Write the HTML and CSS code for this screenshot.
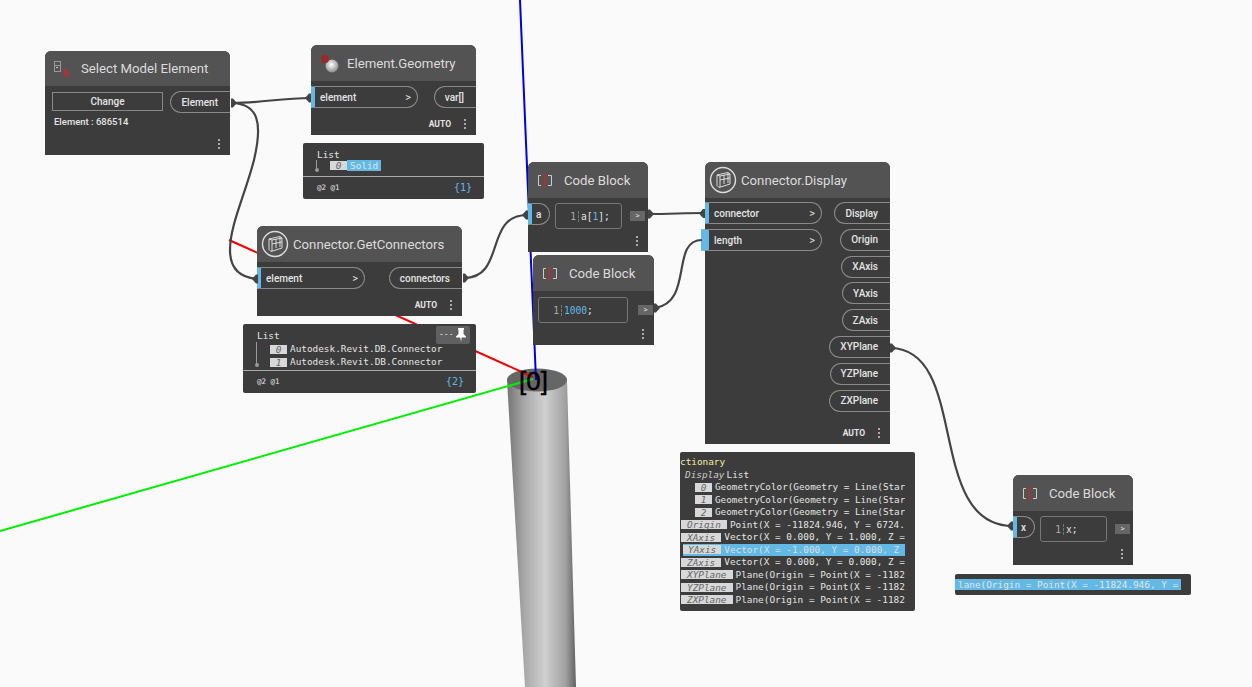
FILE: index.html
```html
<!DOCTYPE html>
<html>
<head>
<title>Dynamo graph</title>
<link rel="stylesheet" href="styles.css">
</head>
<body>
<div class="canvas">

    <!-- 3d background -->
    <svg class="layer" width="1252" height="687">
        <defs>
            <linearGradient id="pipe" x1="0" x2="1" y1="0" y2="0">
                <stop offset="0" stop-color="#747474"/>
                <stop offset="0.25" stop-color="#a8a8a8"/>
                <stop offset="0.55" stop-color="#d0d0d0"/>
                <stop offset="0.85" stop-color="#a0a0a0"/>
                <stop offset="1" stop-color="#626262"/>
            </linearGradient>
        </defs>
        <path d="M507 380 L525 687 L576 687 L567 380 Z" fill="url(#pipe)"/>
        <ellipse cx="537" cy="380" rx="30" ry="11.500" fill="#666"/>
        <line x1="520" y1="0" x2="536" y2="380" stroke="#0000e0" stroke-width="2"/>
        <line x1="229" y1="240" x2="533" y2="377" stroke="#f00000" stroke-width="2"/>
        <line x1="0" y1="531" x2="533" y2="379" stroke="#00ee00" stroke-width="2"/>
    </svg>
    <div class="axis-label">[0]</div>

    <div class="node n-select">
        <div class="node-head head-35">
            <svg class="icon" width="26" height="26" viewBox="0 0 26 26">
                <rect x="5.500" y="5.500" width="6" height="10" fill="none" stroke="#999"/>
                <line x1="5.500" y1="9.500" x2="11.500" y2="9.500" stroke="#999"/>
                <rect x="7" y="11" width="2" height="1" fill="#ccc"/>
                <path d="M14.500 11 L21.500 18.500 L19 18.500 L20 21.500 L17.500 21.500 L16.500 19 L15 20.500 Z" fill="#a33"/>
            </svg>
            <span class="title">Select Model Element</span>
        </div>
        <div class="select-body">
            <div class="select-left">
                <div class="change">Change</div>
                <div class="elem-id">Element : 686514</div>
            </div>
            <div class="out-port">Element</div>
        </div>
        <div class="node-foot"><span class="dots"></span></div>
    </div>

    <div class="node n-geom">
        <div class="node-head">
            <svg class="icon" width="26" height="26" viewBox="0 0 26 26">
                <defs>
                    <radialGradient id="ball" cx="0.45" cy="0.4" r="0.7">
                        <stop offset="0" stop-color="#fff"/>
                        <stop offset="1" stop-color="#777"/>
                    </radialGradient>
                </defs>
                <circle cx="17" cy="16" r="6.500" fill="url(#ball)"/>
                <circle cx="10" cy="9" r="4" fill="#9a2a2a"/>
            </svg>
            <span class="title">Element.Geometry</span>
        </div>
        <div class="node-body">
            <div class="in-port w-105">element<b>&gt;</b></div>
            <div class="out-port">var[]</div>
        </div>
        <div class="node-foot"><span class="auto">AUTO</span><span class="dots"></span></div>
    </div>

    <div class="watch w-solid">
        <div class="watch-main">
            <span class="tree"></span>
            <div class="list-title">List</div>
            <div class="row ind flush"><span class="idx">0</span><span class="hl">Solid</span></div>
        </div>
        <div class="watch-foot"><span>@2 @1</span><span class="count">{1}</span></div>
    </div>

    <div class="node n-getconn">
        <div class="node-head tight">
            <svg class="icon" width="28" height="28" viewBox="0 0 28 28">
                <circle cx="14" cy="14" r="12.500" fill="none" stroke="#ddd" stroke-width="1.400"/>
                <path d="M8 9 L19 6.500 L21 8 L21 18 L10 21.500 L8 19.500 Z M11 10 L21 8 M11 10 L11 21 M8 9 L11 10 M15 9 L15 18 M19 7 L19 17 M11 14 L21 12" fill="none" stroke="#ddd"/>
            </svg>
            <span class="title">Connector.GetConnectors</span>
        </div>
        <div class="node-body">
            <div class="in-port w-108">element<b>&gt;</b></div>
            <div class="out-port">connectors</div>
        </div>
        <div class="node-foot"><span class="auto">AUTO</span><span class="dots"></span></div>
    </div>

    <div class="watch w-conn">
        <div class="pin">--- <svg width="12" height="14" viewBox="0 0 12 14"><path d="M3 0 H9 V1.500 L8.500 2 V6 L11 8.500 V9.500 H6.700 L6 14 L5.300 9.500 H1 V8.500 L3.500 6 V2 L3 1.500 Z" fill="#fff"/></svg></div>
        <div class="watch-main">
            <span class="tree"></span>
            <div class="list-title">List</div>
            <div class="row ind"><span class="idx">0</span><span>Autodesk.Revit.DB.Connector</span></div>
            <div class="row ind"><span class="idx">1</span><span>Autodesk.Revit.DB.Connector</span></div>
        </div>
        <div class="watch-foot"><span>@2 @1</span><span class="count">{2}</span></div>
    </div>

    <div class="node n-code1">
        <div class="node-head code-head">
            <svg class="icon-code" width="18" height="16" viewBox="0 0 18 16">
                <path d="M5 3.500 H2.500 V13.500 H5 M12 3.500 H15.500 V13.500 H12" fill="none" stroke="#ccc"/>
                <path d="M6.500 2.500 H10.500 M6.500 14.500 H10.500" stroke="#a33"/>
                <rect x="7.500" y="2" width="2" height="13" fill="#a33"/>
            </svg>
            <span class="title">Code Block</span>
        </div>
        <div class="node-body code-body">
            <div class="in-port short">a</div>
            <div class="code w-a"><span class="ln">1</span><span>a[<i>1</i>];</span></div>
            <div class="run">&gt;</div>
        </div>
        <div class="node-foot"><span class="dots"></span></div>
    </div>

    <div class="node n-code2">
        <div class="node-head code-head">
            <svg class="icon-code" width="18" height="16" viewBox="0 0 18 16">
                <path d="M5 3.500 H2.500 V13.500 H5 M12 3.500 H15.500 V13.500 H12" fill="none" stroke="#ccc"/>
                <path d="M6.500 2.500 H10.500 M6.500 14.500 H10.500" stroke="#a33"/>
                <rect x="7.500" y="2" width="2" height="13" fill="#a33"/>
            </svg>
            <span class="title">Code Block</span>
        </div>
        <div class="node-body code-body pad-5">
            <div class="code w-1000"><span class="ln">1</span><span><i>1000</i>;</span></div>
            <div class="run">&gt;</div>
        </div>
        <div class="node-foot"><span class="dots"></span></div>
    </div>

    <div class="node n-display">
        <div class="node-head tight">
            <svg class="icon" width="28" height="28" viewBox="0 0 28 28">
                <circle cx="14" cy="14" r="12.500" fill="none" stroke="#ddd" stroke-width="1.400"/>
                <path d="M8 9 L19 6.500 L21 8 L21 18 L10 21.500 L8 19.500 Z M11 10 L21 8 M11 10 L11 21 M8 9 L11 10 M15 9 L15 18 M19 7 L19 17 M11 14 L21 12" fill="none" stroke="#ddd"/>
            </svg>
            <span class="title">Connector.Display</span>
        </div>
        <div class="display-body">
            <div class="display-ins">
                <div class="in-port w-117">connector<b>&gt;</b></div>
                <div class="in-port w-117 wide-tab">length<b>&gt;</b></div>
            </div>
            <div class="display-outs">
                <div class="out-port">Display</div>
                <div class="out-port">Origin</div>
                <div class="out-port">XAxis</div>
                <div class="out-port">YAxis</div>
                <div class="out-port">ZAxis</div>
                <div class="out-port">XYPlane</div>
                <div class="out-port">YZPlane</div>
                <div class="out-port">ZXPlane</div>
            </div>
        </div>
        <div class="node-foot"><span class="auto">AUTO</span><span class="dots"></span></div>
    </div>

    <div class="watch w-dict">
        <div class="dict-clip">
            <div class="dict-title">ctionary</div>
            <div class="dict-display"><em>Display</em><span>List</span></div>
            <div class="row sub"><span class="idx">0</span><span>GeometryColor(Geometry = Line(Star</span></div>
            <div class="row sub"><span class="idx">1</span><span>GeometryColor(Geometry = Line(Star</span></div>
            <div class="row sub"><span class="idx">2</span><span>GeometryColor(Geometry = Line(Star</span></div>
            <div class="row"><span class="key">Origin</span><span>Point(X = -11824.946, Y = 6724.</span></div>
            <div class="row"><span class="key">XAxis</span><span>Vector(X = 0.000, Y = 1.000, Z =</span></div>
            <div class="row sel"><span class="key">YAxis</span><span class="sel-text">Vector(X = -1.000, Y = 0.000, Z</span></div>
            <div class="row"><span class="key">ZAxis</span><span>Vector(X = 0.000, Y = 0.000, Z =</span></div>
            <div class="row"><span class="key">XYPlane</span><span>Plane(Origin = Point(X = -1182</span></div>
            <div class="row"><span class="key">YZPlane</span><span>Plane(Origin = Point(X = -1182</span></div>
            <div class="row"><span class="key">ZXPlane</span><span>Plane(Origin = Point(X = -1182</span></div>
        </div>
    </div>

    <div class="node n-code3">
        <div class="node-head code-head">
            <svg class="icon-code" width="18" height="16" viewBox="0 0 18 16">
                <path d="M5 3.500 H2.500 V13.500 H5 M12 3.500 H15.500 V13.500 H12" fill="none" stroke="#ccc"/>
                <path d="M6.500 2.500 H10.500 M6.500 14.500 H10.500" stroke="#a33"/>
                <rect x="7.500" y="2" width="2" height="13" fill="#a33"/>
            </svg>
            <span class="title">Code Block</span>
        </div>
        <div class="node-body code-body">
            <div class="in-port short">x</div>
            <div class="code w-a"><span class="ln">1</span><span class="plain">x;</span></div>
            <div class="run">&gt;</div>
        </div>
        <div class="node-foot"><span class="dots"></span></div>
    </div>

    <div class="watch w-plane">
        <div class="plane-text">lane(Origin = Point(X = -11824.946, Y =</div>
    </div>

    <!-- wires -->
    <svg class="layer wires" width="1252" height="687">
        <path d="M232 103 C258 104 263 122 254 160 C245 195 230 225 230 250 C230 270 242 278 258 279"/>
        <path d="M232 103 C262 103 280 98 311 98"/>
        <path d="M464 278 C506 278 484 215 527 215"/>
        <path d="M649 214 C670 214 685 213 705 213"/>
        <path d="M655 308 C694 302 670 240 702 240"/>
        <path d="M891 348 C970 350 925 526 1013 526"/>
        <g class="caps">
            <path d="M231 98.500 H233 L237 103 L233 107.500 H231 Z"/>
            <path d="M311 93.500 H309 L305 98 L309 102.500 H311 Z"/>
            <path d="M258 274.500 H256 L252 279 L256 283.500 H258 Z"/>
            <path d="M463 273.500 H465 L469 278 L465 282.500 H463 Z"/>
            <path d="M528 210.500 H526 L522 215 L526 219.500 H528 Z"/>
            <path d="M648 209.500 H650 L654 214 L650 218.500 H648 Z"/>
            <path d="M705 209 H703 L699 213.500 L703 218 H705 Z"/>
            <path d="M654 303.500 H656 L660 308 L656 312.500 H654 Z"/>
            <path d="M890 343.500 H892 L896 348 L892 352.500 H890 Z"/>
            <path d="M1013 521.500 H1011 L1007 526 L1011 530.500 H1013 Z"/>
        </g>
    </svg>
</div>
</body>
</html>
```

FILE: styles.css
```css
body {
    margin: 0;
    background-color: #fafafa;
    font-family: Roboto, sans-serif;
    color: #e4e4e4;
    overflow: hidden;
}

.canvas {
    position: relative;
    width: 1252px;
    height: 687px;
    overflow: hidden;
}

.layer {
    position: absolute;
    left: 0;
    top: 0;
}

.wires {
    pointer-events: none;
}

.wires path {
    fill: none;
    stroke: #444;
    stroke-width: 2.200;
}

.wires .caps path {
    fill: #444;
    stroke: none;
}

.axis-label {
    position: absolute;
    left: 519px;
    top: 366px;
    font-family: "Liberation Sans", sans-serif;
    font-size: 26px;
    line-height: 30px;
    color: #000;
    -webkit-text-stroke: 0.400px #000;
}

/* nodes */

.node {
    position: absolute;
    display: flex;
    flex-direction: column;
    background-color: #3c3c3c;
    border-radius: 6px 6px 0 0;
}

.n-select { left: 45px; top: 51px; width: 185px; height: 104px; }
.n-geom { left: 311px; top: 45px; width: 165px; height: 90px; }
.n-getconn { left: 257px; top: 226px; width: 205px; height: 90px; }
.n-code1 { left: 528px; top: 162px; width: 120px; height: 90px; }
.n-code2 { left: 533px; top: 255px; width: 121px; height: 90px; }
.n-display { left: 705px; top: 162px; width: 185px; height: 282px; }
.n-code3 { left: 1013px; top: 475px; width: 120px; height: 90px; }

.node-head {
    display: flex;
    align-items: center;
    gap: 6px;
    height: 36px;
    flex-shrink: 0;
    padding-left: 4px;
    background-color: #535353;
    border-radius: 6px 6px 0 0;
}

.head-35 {
    height: 35px;
}

.tight {
    gap: 4px;
}

.code-head {
    gap: 10px;
    padding-left: 8px;
}

.icon-code {
    flex-shrink: 0;
}

.title {
    font-size: 13.200px;
    color: #dcdcdc;
    white-space: nowrap;
}

.node-body {
    display: flex;
    justify-content: space-between;
    padding-top: 5px;
}

.node-foot {
    display: flex;
    align-items: center;
    justify-content: flex-end;
    gap: 13px;
    height: 22px;
    margin-top: auto;
    padding-right: 10px;
}

.auto {
    font-size: 8.500px;
    font-weight: 700;
}

.dots {
    width: 2px;
    height: 2px;
    background-color: #aaa;
    box-shadow: 0 -4px 0 #aaa, 0 4px 0 #aaa;
}

/* ports */

.in-port, .out-port {
    display: flex;
    align-items: center;
    box-sizing: border-box;
    height: 22px;
    font-size: 10px;
    font-weight: 500;
    white-space: nowrap;
    border: 1px solid #8a8a8a;
}

.in-port {
    justify-content: space-between;
    padding: 0 6px 0 5px;
    border-left: 4px solid #62b9e6;
    border-radius: 0 11px 11px 0;
}

.in-port b {
    font-weight: 400;
    font-size: 11px;
}

.out-port {
    padding: 0 12px 0 10px;
    border-right: none;
    border-radius: 11px 0 0 11px;
}

.w-105 { width: 107px; }
.w-108 { width: 108px; }
.w-117 { width: 117px; }

.short {
    width: 22px;
    padding-left: 4px;
    flex-shrink: 0;
}

.wide-tab {
    border-left-width: 8px;
    margin-left: -4px;
    width: 121px;
}

/* select node */

.select-body {
    display: flex;
    justify-content: space-between;
    padding: 5px 0 0 7px;
}

.change {
    width: 111px;
    box-sizing: border-box;
    height: 19px;
    margin-top: 1px;
    line-height: 17px;
    text-align: center;
    font-size: 10px;
    font-weight: 500;
    border: 1px solid #888;
}

.elem-id {
    margin: 5px 0 0 2px;
    font-size: 9.500px;
    font-weight: 500;
}

/* code blocks */

.code-body {
    justify-content: flex-start;
    gap: 5px;
}

.pad-5 {
    padding: 6px 0 0 5px;
    gap: 7px;
}

.code {
    display: flex;
    align-items: center;
    box-sizing: border-box;
    height: 26px;
    font-family: "DejaVu Sans Mono", monospace;
    font-size: 9.600px;
    border: 1px solid #777;
    border-radius: 3px;
}

.w-a { width: 67px; }
.w-1000 { width: 90px; }

.ln {
    width: 20px;
    text-align: right;
    padding-right: 2px;
    margin-right: 2px;
    color: #aaa;
    border-right: 1px dashed #777;
}

.code i {
    font-style: normal;
    color: #62b9e6;
}

.run {
    align-self: center;
    width: 15px;
    height: 10px;
    margin-left: 3px;
    line-height: 9px;
    text-align: center;
    font-size: 8px;
    background-color: #666;
}

/* display node */

.display-body {
    display: flex;
    justify-content: space-between;
    padding-top: 4px;
}

.display-ins {
    display: flex;
    flex-direction: column;
    gap: 5px;
}

.display-outs {
    display: flex;
    flex-direction: column;
    align-items: flex-end;
    gap: 4.800px;
}

/* watch bubbles */

.watch {
    position: absolute;
    box-sizing: border-box;
    background-color: #3c3c3c;
    border-radius: 2px;
    font-family: "DejaVu Sans Mono", monospace;
    font-size: 9.400px;
    line-height: 12.500px;
    white-space: nowrap;
}

.w-solid { left: 303px; top: 143px; width: 181px; height: 56px; }
.w-conn { left: 243px; top: 324px; width: 233px; height: 69px; }
.w-dict { left: 680px; top: 452px; width: 235px; height: 159px; }
.w-plane { left: 955px; top: 574px; width: 236px; height: 21px; padding: 5px 0 0 0; }

.watch-main {
    display: flex;
    flex-direction: column;
    box-sizing: border-box;
    padding: 6px 0 0 14px;
    border-bottom: 1px solid #aaa;
}

.w-solid .watch-main { height: 34px; }
.w-conn .watch-main { height: 47px; }

.tree {
    position: absolute;
    left: 13px;
    top: 17px;
    width: 1px;
    height: 10px;
    background-color: #999;
}

.w-conn .tree {
    top: 18px;
    height: 23px;
}

.tree::after {
    content: "";
    position: absolute;
    left: -1.500px;
    bottom: -2px;
    width: 4px;
    height: 4px;
    border-radius: 2px;
    background-color: #999;
}

.row {
    display: flex;
    align-items: center;
    gap: 3px;
    height: 12.500px;
}

.w-conn .row {
    height: 13px;
}

.w-solid .row {
    margin-top: -2px;
}

.ind {
    margin-left: 13px;
}

.flush {
    gap: 0;
}

.sub {
    margin-left: 15px;
    font-size: 9.300px;
}

.idx, .key {
    font-style: italic;
    text-align: center;
    color: #666;
    background-color: #d8d8d8;
    height: 9px;
    line-height: 9px;
    flex-shrink: 0;
}

.idx {
    width: 17px;
}

.key {
    padding: 0 6px;
    margin-left: 1px;
}

.hl {
    padding: 0 3px;
    height: 11px;
    line-height: 11px;
    background-color: #62b9e6;
}

.watch-foot {
    display: flex;
    justify-content: space-between;
    align-items: center;
    height: 22px;
    padding: 0 12px 0 14px;
    font-size: 7.500px;
}

.count {
    font-size: 10px;
    color: #62b9e6;
}

.pin {
    position: absolute;
    left: 193px;
    top: 2px;
    display: flex;
    align-items: center;
    gap: 2px;
    padding: 0 3px;
    height: 18px;
    font-size: 8px;
    background-color: #606060;
    border-radius: 2px;
}

.dict-clip {
    box-sizing: border-box;
    width: 225px;
    height: 159px;
    padding-top: 4px;
    overflow: hidden;
}

.dict-title {
    color: #f2eda0;
}

.dict-display {
    display: flex;
    gap: 2px;
    margin-left: 5px;
}

.dict-display em {
    color: #ccc;
}

.sel {
    margin-left: 3px;
    background-color: #62b9e6;
}

.sel .key {
    margin-left: 0;
    padding: 0 5px;
}

.sel-text {
    color: #ddd;
}

.plane-text {
    overflow: hidden;
    box-sizing: border-box;
    width: 226px;
    padding-left: 3px;
    height: 11px;
    line-height: 11px;
    background-color: #62b9e6;
}
```
